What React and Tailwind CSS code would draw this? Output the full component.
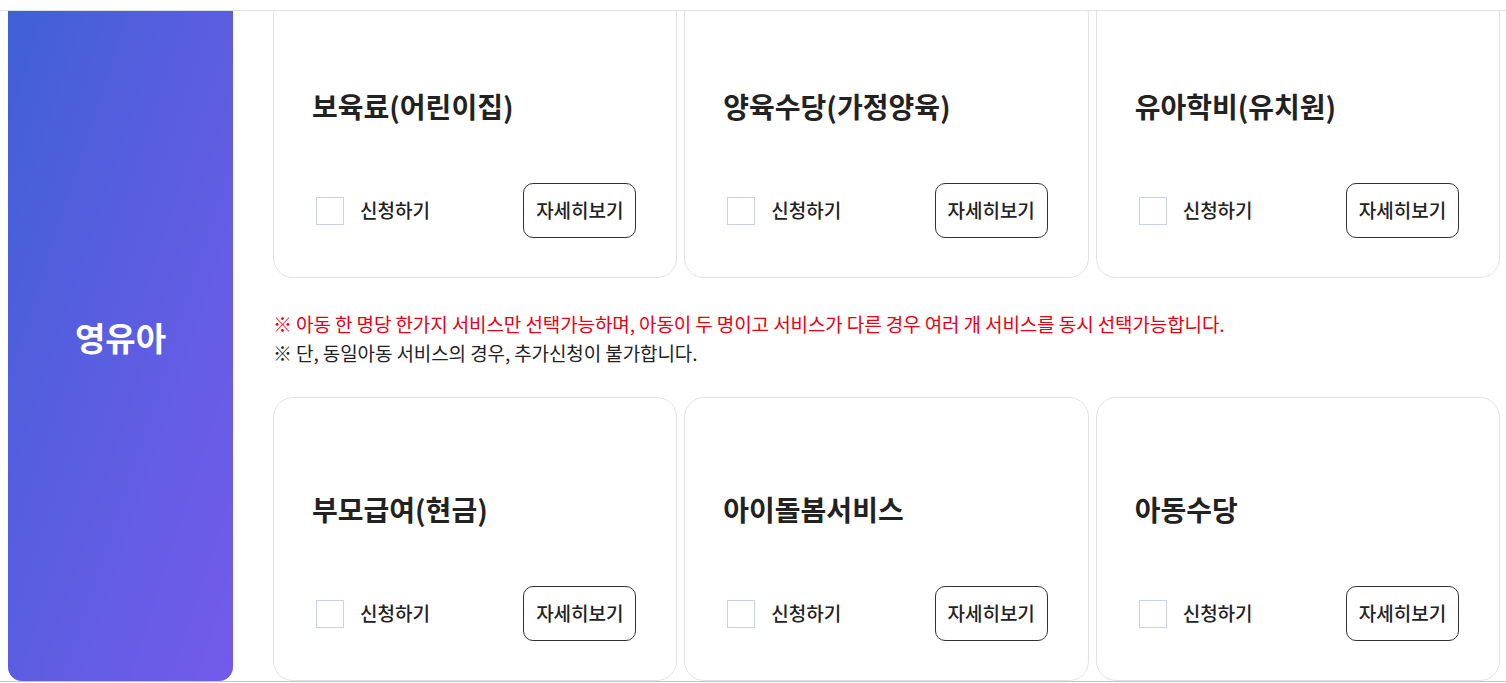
import { useState } from "react";

const rows = [
  ["보육료(어린이집)", "양육수당(가정양육)", "유아학비(유치원)"],
  ["부모급여(현금)", "아이돌봄서비스", "아동수당"],
];

function ServiceCard({ title, checked, onToggle }) {
  return (
    <div className="h-[284px] rounded-[20px] border border-[#e2e2e2] bg-white px-10 pt-[93px]">
      <h3 className="-ml-[2px] text-[28px] font-bold leading-9 text-[#222]">{title}</h3>
      <div className="mt-[59px] flex items-center justify-between">
        <label className="ml-[2px] flex cursor-pointer items-center gap-4">
          <span
            onClick={onToggle}
            className={`h-7 w-7 border ${checked ? "border-[#4a5fd8] bg-[#4a5fd8]" : "border-[#c9d0e2] bg-white"}`}
          />
          <span className="text-[19px] font-medium text-[#222]">신청하기</span>
        </label>
        <button className="h-[55px] w-[113px] rounded-[10px] border border-[#333] bg-white text-[19px] font-medium text-[#222]">
          자세히보기
        </button>
      </div>
    </div>
  );
}

export default function App() {
  const [selected, setSelected] = useState({});

  const toggle = (name) => setSelected((prev) => ({ ...prev, [name]: !prev[name] }));

  return (
    <div className="h-[683px] bg-white pt-[10px] font-['Noto_Sans_CJK_KR','Noto_Sans',sans-serif]">
      <div className="h-[672px] overflow-hidden border-y border-t-[#e0e0e0] border-b-[#b9c6de]">
        {/* 스크롤된 상태: 위쪽 17px 가려짐 */}
        <div className="-mt-[17px] flex gap-10 pl-2 pr-[6px]">
          <div className="flex w-[225px] shrink-0 items-center justify-center rounded-b-[14px] bg-linear-to-br from-[#3e60d6] to-[#735aec]">
            <span className="text-[33px] font-bold text-white">영유아</span>
          </div>

          <div className="flex-1">
            <div className="grid grid-cols-3 gap-[7px]">
              {rows[0].map((t) => (
                <ServiceCard key={t} title={t} checked={!!selected[t]} onToggle={() => toggle(t)} />
              ))}
            </div>

            <div className="pb-[30px] pt-[31px] text-[19px] leading-[29px] tracking-[-0.1px]">
              <p className="text-[#e60012]">
                ※ 아동 한 명당 한가지 서비스만 선택가능하며, 아동이 두 명이고 서비스가 다른 경우 여러 개 서비스를 동시 선택가능합니다.
              </p>
              <p className="text-[#222]">※ 단, 동일아동 서비스의 경우, 추가신청이 불가합니다.</p>
            </div>

            <div className="grid grid-cols-3 gap-[7px]">
              {rows[1].map((t) => (
                <ServiceCard key={t} title={t} checked={!!selected[t]} onToggle={() => toggle(t)} />
              ))}
            </div>
          </div>
        </div>
      </div>
    </div>
  );
}
